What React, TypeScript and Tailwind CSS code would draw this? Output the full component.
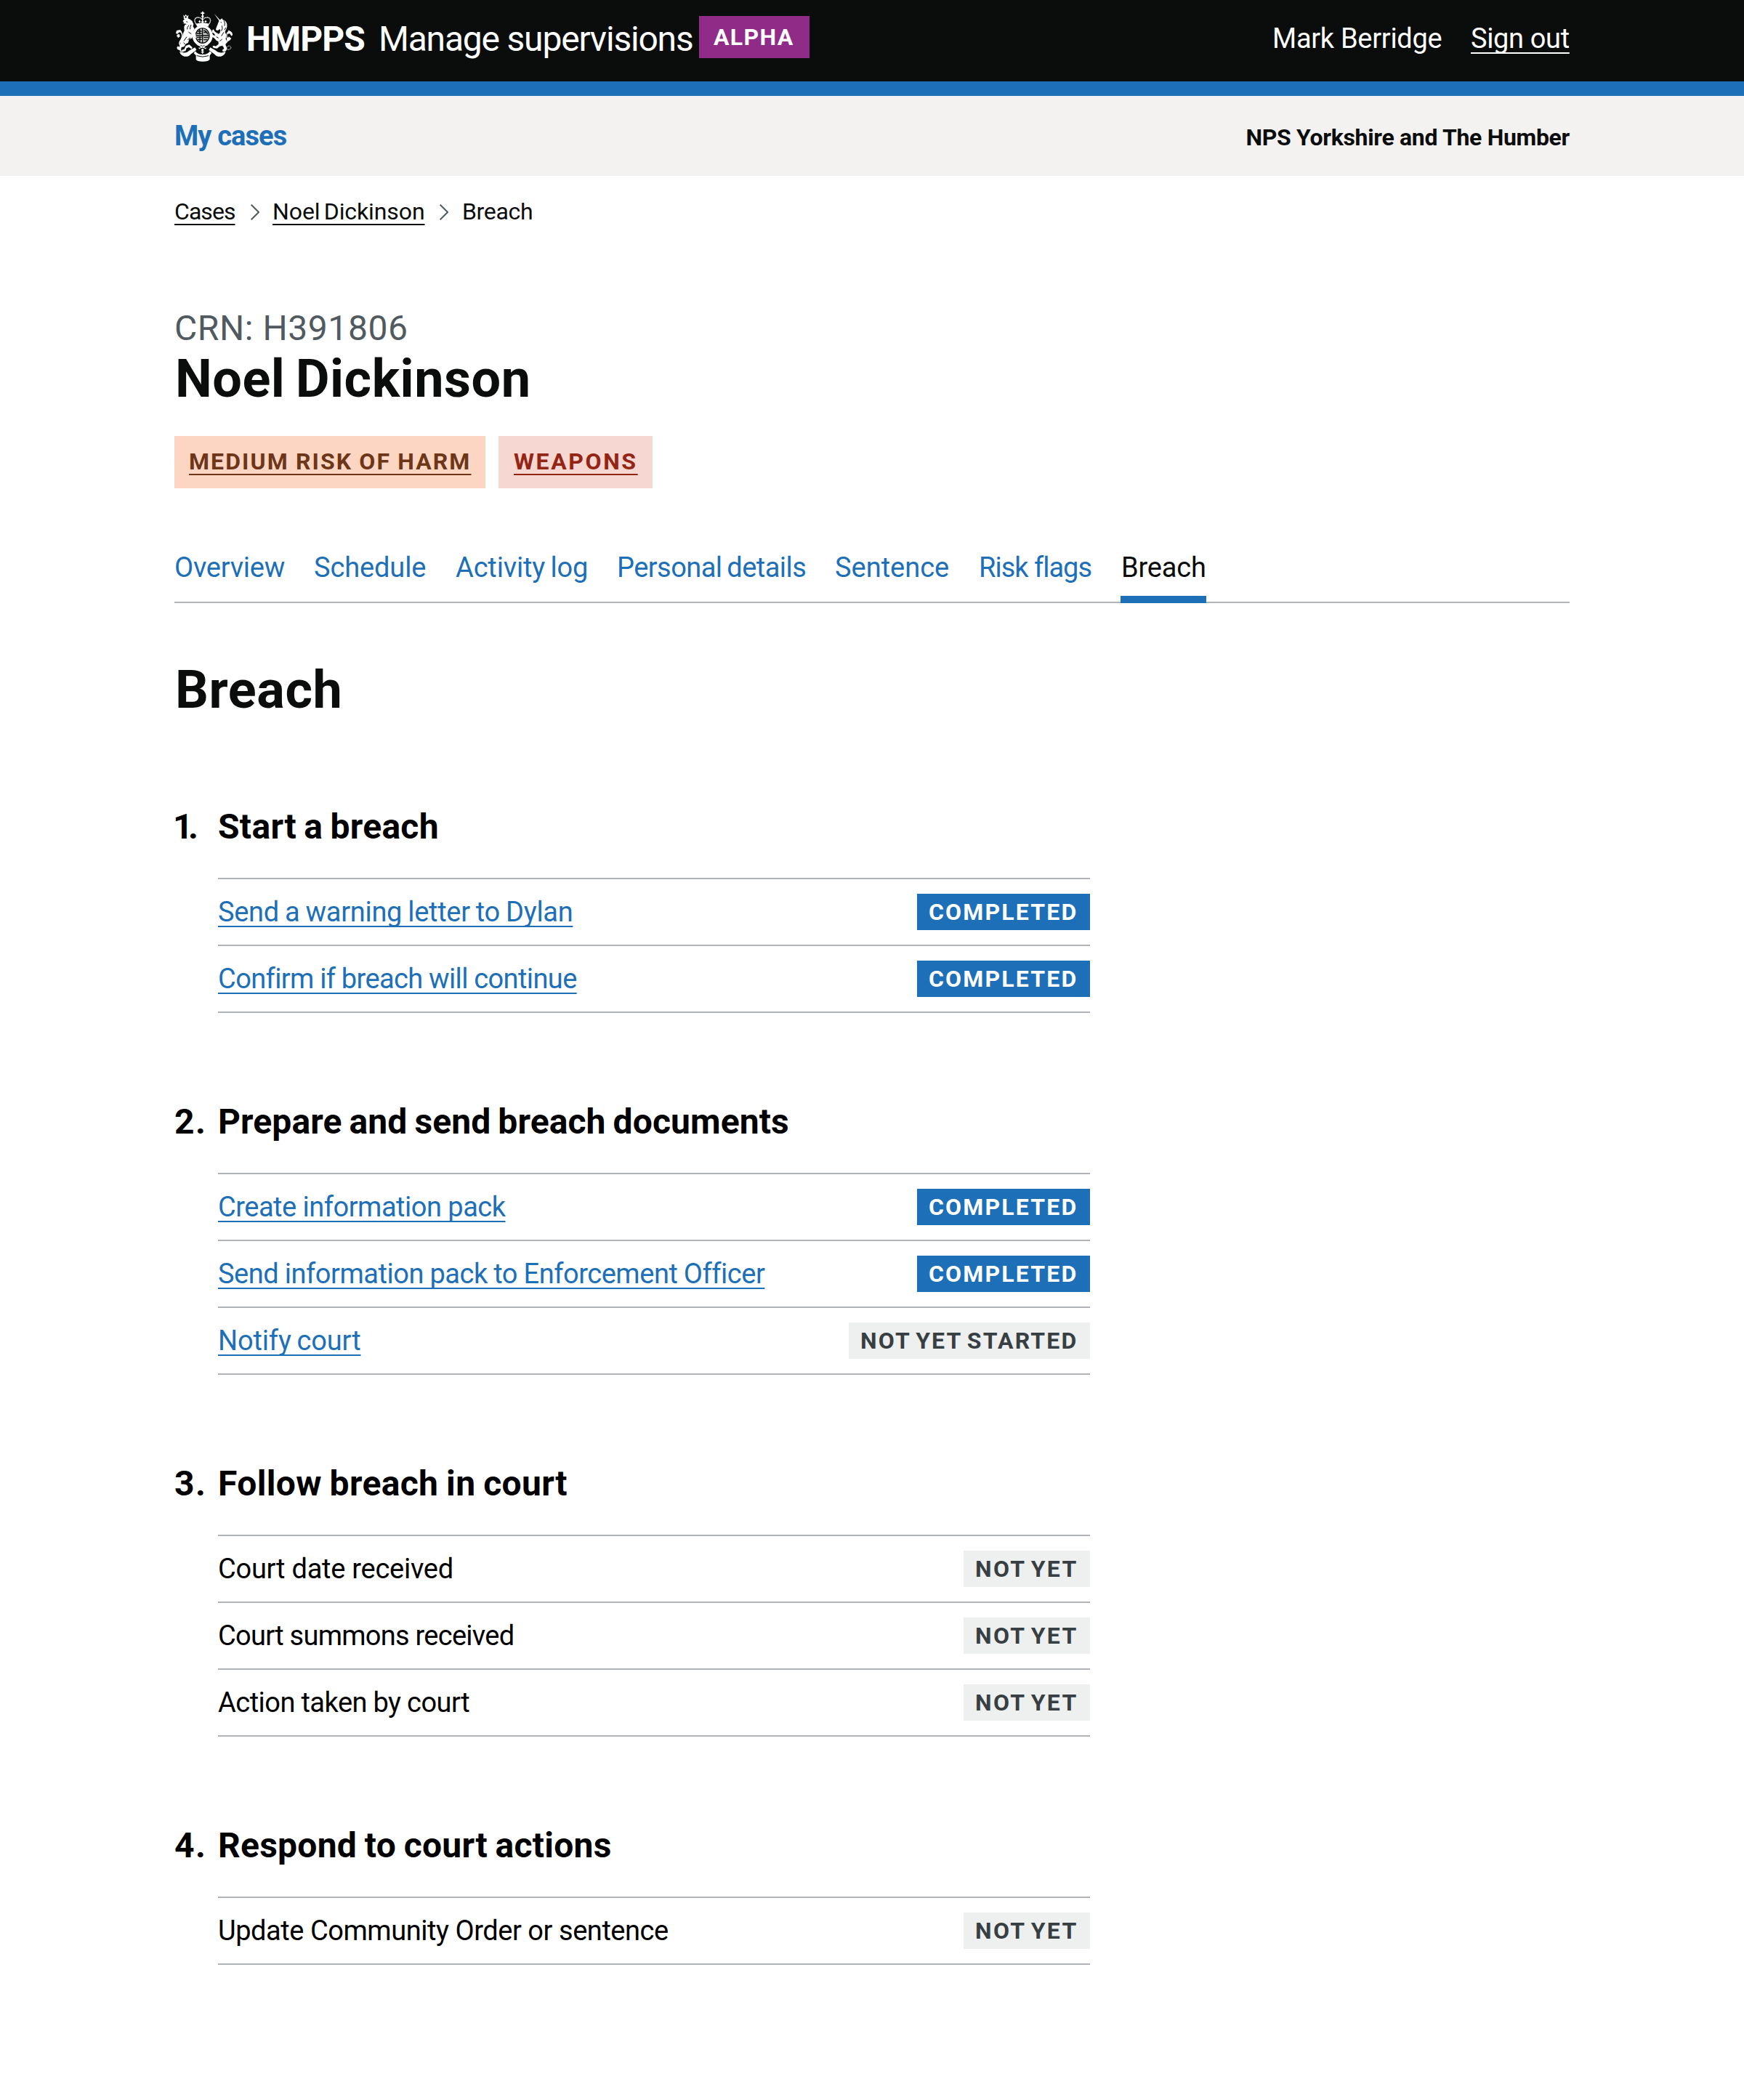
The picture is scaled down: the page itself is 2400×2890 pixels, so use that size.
import React from "react";

type Status = "COMPLETED" | "NOT YET STARTED" | "NOT YET";

interface Task {
  label: string;
  tracking: string;
  status: Status;
  link?: boolean;
}

interface Section {
  number: string;
  numberTracking: string;
  title: string;
  titleTracking: string;
  tasks: Task[];
}

const sections: Section[] = [
  {
    number: "1.",
    numberTracking: "tracking-[-6.5px] -ml-[2px]",
    title: "Start a breach",
    titleTracking: "tracking-[0.3px] [word-spacing:-2px]",
    tasks: [
      { label: "Send a warning letter to Dylan", tracking: "tracking-[-0.3px] [word-spacing:-1px]", status: "COMPLETED", link: true },
      { label: "Confirm if breach will continue", tracking: "tracking-[-0.6px] [word-spacing:-0.5px]", status: "COMPLETED", link: true },
    ],
  },
  {
    number: "2.",
    numberTracking: "tracking-[1.5px]",
    title: "Prepare and send breach documents",
    titleTracking: "tracking-[0.1px] [word-spacing:-2px]",
    tasks: [
      { label: "Create information pack", tracking: "tracking-[-0.5px]", status: "COMPLETED", link: true },
      { label: "Send information pack to Enforcement Officer", tracking: "tracking-[-0.46px] [word-spacing:-0.5px]", status: "COMPLETED", link: true },
      { label: "Notify court", tracking: "tracking-[-0.15px] [word-spacing:-1.5px]", status: "NOT YET STARTED", link: true },
    ],
  },
  {
    number: "3.",
    numberTracking: "tracking-[1.5px]",
    title: "Follow breach in court",
    titleTracking: "tracking-[0.35px] [word-spacing:-1.5px]",
    tasks: [
      { label: "Court date received", tracking: "tracking-[-0.26px]", status: "NOT YET" },
      { label: "Court summons received", tracking: "tracking-[-0.74px]", status: "NOT YET" },
      { label: "Action taken by court", tracking: "tracking-[-0.5px] [word-spacing:-0.5px]", status: "NOT YET" },
    ],
  },
  {
    number: "4.",
    numberTracking: "tracking-[1.5px]",
    title: "Respond to court actions",
    titleTracking: "tracking-[0.25px] [word-spacing:-1.5px]",
    tasks: [{ label: "Update Community Order or sentence", tracking: "tracking-[-0.45px]", status: "NOT YET" }],
  },
];

const badgeStyles: Record<Status, string> = {
  COMPLETED: "w-[238px] bg-[#1d70b8] text-white tracking-[2.18px]",
  "NOT YET STARTED": "w-[332px] bg-[#eeefef] text-[#383f43] tracking-[2.15px] [word-spacing:-3px]",
  "NOT YET": "w-[174px] bg-[#eeefef] text-[#383f43] tracking-[2.3px] [word-spacing:-3px]",
};

const tabs = [
  { label: "Overview", box: "w-[152px] tracking-[-0.25px]" },
  { label: "Schedule", box: "w-[155px] tracking-[-0.12px]" },
  { label: "Activity log", box: "w-[182px] tracking-[-0.16px] [word-spacing:-2px]" },
  { label: "Personal details", box: "w-[260px] tracking-[-0.56px] [word-spacing:-2px]" },
  { label: "Sentence", box: "w-[157px] tracking-[-0.02px]" },
  { label: "Risk flags", box: "w-[156px] pl-[1px] tracking-[-1px]" },
  { label: "Breach", box: "w-[118px] pl-[1px] tracking-[-0.18px]", active: true },
];

const underline = "underline decoration-2 underline-offset-[6px] [text-decoration-skip-ink:none]";

function Crest() {
  return (
    <svg viewBox="15 15 240 213" className="mt-[15px] h-[71px] w-[80px] shrink-0" fill="#fff" stroke="none">
      {/* crown */}
      <path d="M129 17h5v5h5v5h-5v8h-5v-8h-5v-5h5z" />
      <circle cx="131.500" cy="38" r="5" />
      <path
        d="M107 71C92 56 100 41 112 42c9 0 16 5 19 12 3-7 10-12 19-12 13-1 20 14 6 29"
        fill="none"
        stroke="#fff"
        strokeWidth="4"
        strokeDasharray="5 1.500"
      />
      <path d="M131 42v26M119 54v9M144 54v9M115 59h8M140 59h8M126 60h11" fill="none" stroke="#fff" strokeWidth="4" />
      <path d="M105 68q26-9 53 0l-3 12q-24-7-47 0z" />

      {/* garter and quartered shield */}
      <path
        fillRule="evenodd"
        d="M131 75c24 0 42 18 42 42s-18 44-42 44-42-20-42-44 18-42 42-42zm0 10c-17 0-30 14-30 32s13 33 30 33 30-15 30-33-13-32-30-32z"
      />
      <ellipse cx="131" cy="117" rx="26" ry="29" opacity="0.75" />
      <g fill="none" stroke="#0b0c0c" strokeWidth="4">
        <path d="M104 117h54M131 87v60" strokeWidth="4" />
        <path d="M110 99h18M107 108h21M119 90v22" />
        <path d="M136 96q14 3 16 16M136 104h12" />
        <path d="M108 124h20M111 133h17M120 121v22" />
        <path d="M136 125h19M136 134h16" />
      </g>

      {/* lion */}
      <path d="M52 31l5 6 5-8 5 8 6-5-2 16H54z" />
      <path d="M57 40h10M62 36v9" stroke="#0b0c0c" strokeWidth="2.500" />
      <path d="M55 50q9-6 20-3l13 9 6 14-2 9 6 10-4 8 9 13 2 17-7 1-7-10-4 10-11 4-4 14-9 5-8 12-11 2-2 12 5 6 7 3H47q-9-1-10-8l-10-5-2-7 5-6 4 5 6-12-1-14 10-19 2-12 5-11-1-17 5-10-8-4 2-5-5-3z" />
      <path d="M64 59l5 2M57 68l7 3M75 74q-8 8-7 17M84 72q-5 9-4 19M73 102l12 8M66 122l-12 17M81 126l-11 8M53 146l8 9" stroke="#0b0c0c" strokeWidth="3" fill="none" />
      <path d="M42 160Q31 150 39 139q10-14 8-25-1-12-12-14-7 0-11 4" fill="none" stroke="#fff" strokeWidth="4.500" />
      <path d="M24 96l15-3 7 9-11 1-7 7-7-2z" />
      <path d="M36 112q-10-3-12 8 5 0 6 7l8-6z" />
      <path d="M62 159l14-5 13 11-2 8-12-8-10 4-4 12-12 2-5-6 12-4z" />

      {/* unicorn */}
      <path d="M179 26l25 27-4 3z" />
      <path d="M200 54l8-5 3-4 3 6q15 4 18 19 2 12-3 21l-5 10 5 14-2 16 5 9-6 14 6 16-4 11-12 2-4-6 8-6-5-13-13 3-11 9-14-2-5-6 5-4 9 3 11-9v-10l-9-5-9-10-10-5-6-9 7-5 5 7 9 2-5-9-8-4-1-8 7-5 3 7 9 8 9 2 7-10-2-8-9 6-8-2 1-7z" />
      <path d="M206 62l4 1M219 55q7 11 3 22M211 76q5 12-2 22M194 110l10-6M219 103l-10 16M212 132l-10 8M227 84l-5 10M188 122l9 5" stroke="#0b0c0c" strokeWidth="3" fill="none" />
      <path d="M222 151q16-7 11-22-4-11-1-20 4-11 14-8 8 5 7 15" fill="none" stroke="#fff" strokeWidth="4" />
      <path d="M239 94l7 6 8 10-3 9-8-11-9 3z" />
      <path d="M240 121l-9 9 3 12 9-5 7-8z" />
      <path d="M213 161q6-7 10 0t10 3q7-8 13-2t-2 11-13-2-8 8-9 4" fill="none" stroke="#fff" strokeWidth="3" strokeDasharray="5 2" />

      {/* motto ribbon */}
      <path d="M36 184q26 10 42-6l22-12 6 10-24 18q-10 12-26 9-14-3-20-19z" />
      <path d="M227 184q-26 10-42-6l-22-12-6 10 24 18q10 12 26 9 14-3 20-19z" />
      <path d="M101 181q8 14 31 14t30-14l7 8-8 10v16q-5 9-29 9t-28-9v-16l-9-9z" />
      <path d="M107 200q25 9 49 0" fill="none" stroke="#0b0c0c" strokeWidth="3" />
      <path d="M110 153l36 17M152 153l-36 17" stroke="#fff" strokeWidth="6" />
      <path d="M122 156l9 5 9-4M118 166l7 3M139 168l7-3" stroke="#0b0c0c" strokeWidth="2.500" fill="none" />
      <circle cx="131" cy="176" r="5" />
      <path d="M131 178v14M125 185h12" stroke="#fff" strokeWidth="4" />
    </svg>
  );
}

function Chevron() {
  return (
    <svg viewBox="0 0 12 22" className="mt-[10px] h-[22px] w-[12px] shrink-0" fill="none" stroke="#505a5f" strokeWidth="2">
      <path d="M0.700 0.700L11 11L0.700 21.300" />
    </svg>
  );
}

function Header() {
  return (
    <header className="h-[132px] border-b-[20px] border-[#1d70b8] bg-[#0b0c0c] text-white">
      <div className="mx-auto flex h-full w-[1920px] items-start justify-between">
        <div className="flex items-start">
          <Crest />
          <span className="ml-[19px] w-[182px] text-[48px] leading-[107px] font-bold tracking-[-0.87px]">HMPPS</span>
          <span className="w-[441px] text-[48px] leading-[107px] tracking-[-1.2px] whitespace-nowrap">Manage supervisions</span>
          <span className="mt-[22px] h-[58px] w-[152px] bg-[#912b88] pl-[20px] text-[32px] leading-[58px] font-bold tracking-[1.35px]">
            ALPHA
          </span>
        </div>
        <div className="flex text-[38px] leading-[106px] whitespace-nowrap">
          <span className="w-[273px] tracking-[-0.29px]">Mark Berridge</span>
          <a className={`w-[136px] tracking-[-0.35px] ${underline}`}>Sign out</a>
        </div>
      </div>
    </header>
  );
}

function TaskSection({ section }: { section: Section }) {
  return (
    <section>
      <h2 className="flex h-[59px] text-[48px] leading-[59px] font-bold text-black">
        <span className="w-[60px]">
          <span className={`inline-block ${section.numberTracking}`}>{section.number}</span>
        </span>
        <span className={section.titleTracking}>{section.title}</span>
      </h2>
      <ul className="mt-[41px] ml-[60px] w-[1200px] border-t-2 border-[#b1b4b6]">
        {section.tasks.map((task) => (
          <li key={task.label} className="flex h-[92px] items-center justify-between border-b-2 border-[#b1b4b6]">
            <span className={`text-[38px] leading-[50px] ${task.tracking} ${task.link ? `text-[#1d70b8] ${underline}` : "text-black"}`}>
              {task.label}
            </span>
            <strong className={`h-[50px] pl-4 text-[32px] leading-[50px] font-bold whitespace-nowrap ${badgeStyles[task.status]}`}>
              {task.status}
            </strong>
          </li>
        ))}
      </ul>
    </section>
  );
}

export default function App() {
  return (
    <div className="min-h-[2890px] bg-white font-['Roboto',sans-serif] text-[#0b0c0c]">
      <Header />
      <div className="h-[110px] bg-[#f3f2f1]">
        <div className="mx-auto flex w-[1920px] justify-between font-bold">
          <a className="text-[38px] leading-[110px] tracking-[-0.9px] text-[#1d70b8]">My cases</a>
          <span className="text-[32px] leading-[114px] tracking-[-0.32px]">NPS Yorkshire and The Humber</span>
        </div>
      </div>

      <main className="mx-auto w-[1920px]">
        <nav className="flex h-[69px] pt-[29px] text-[32px] leading-[40px] whitespace-nowrap">
          <span className="w-[105px]">
            <a className={`tracking-[-0.95px] ${underline}`}>Cases</a>
          </span>
          <Chevron />
          <span className="ml-[18px] w-[230px]">
            <a className={`tracking-[-0.1px] [word-spacing:-2.5px] ${underline}`}>Noel Dickinson</a>
          </span>
          <Chevron />
          <span className="ml-[19px] tracking-[-0.32px]">Breach</span>
        </nav>

        <div className="mt-[111px] text-[48px] leading-[59px] tracking-[0.57px] text-[#505a5f]">CRN: H391806</div>
        <h1 className="pl-[1px] text-[72px] leading-[81px] font-bold tracking-[0.5px] [word-spacing:-4px]">Noel Dickinson</h1>

        <div className="mt-[38px] flex gap-[18px] text-[32px] leading-[70px] font-bold whitespace-nowrap">
          <span className="h-[72px] w-[428px] bg-[#fcd6c3] pl-[20px] tracking-[2.1px] [word-spacing:-1px] text-[#6e3619]">
            <a className={underline}>MEDIUM RISK OF HARM</a>
          </span>
          <span className="h-[72px] w-[212px] bg-[#f6d7d2] pl-[21px] tracking-[2.6px] text-[#942514]">
            <a className={underline}>WEAPONS</a>
          </span>
        </div>

        <nav className="mt-[80px] flex h-[78px] gap-[40px] border-b-2 border-[#b1b4b6] text-[38px] leading-[58px] whitespace-nowrap">
          {tabs.map((tab) => (
            <a
              key={tab.label}
              className={`h-[78px] ${tab.box} ${tab.active ? "border-b-[10px] border-[#1d70b8]" : "text-[#1d70b8]"}`}
            >
              {tab.label}
            </a>
          ))}
        </nav>

        <h1 className="mt-[79px] pl-[1px] text-[72px] leading-[81px] font-bold tracking-[0.6px]">Breach</h1>

        <div className="mt-[118px] flex flex-col gap-[120px]">
          {sections.map((section) => (
            <TaskSection key={section.number} section={section} />
          ))}
        </div>
      </main>
    </div>
  );
}
